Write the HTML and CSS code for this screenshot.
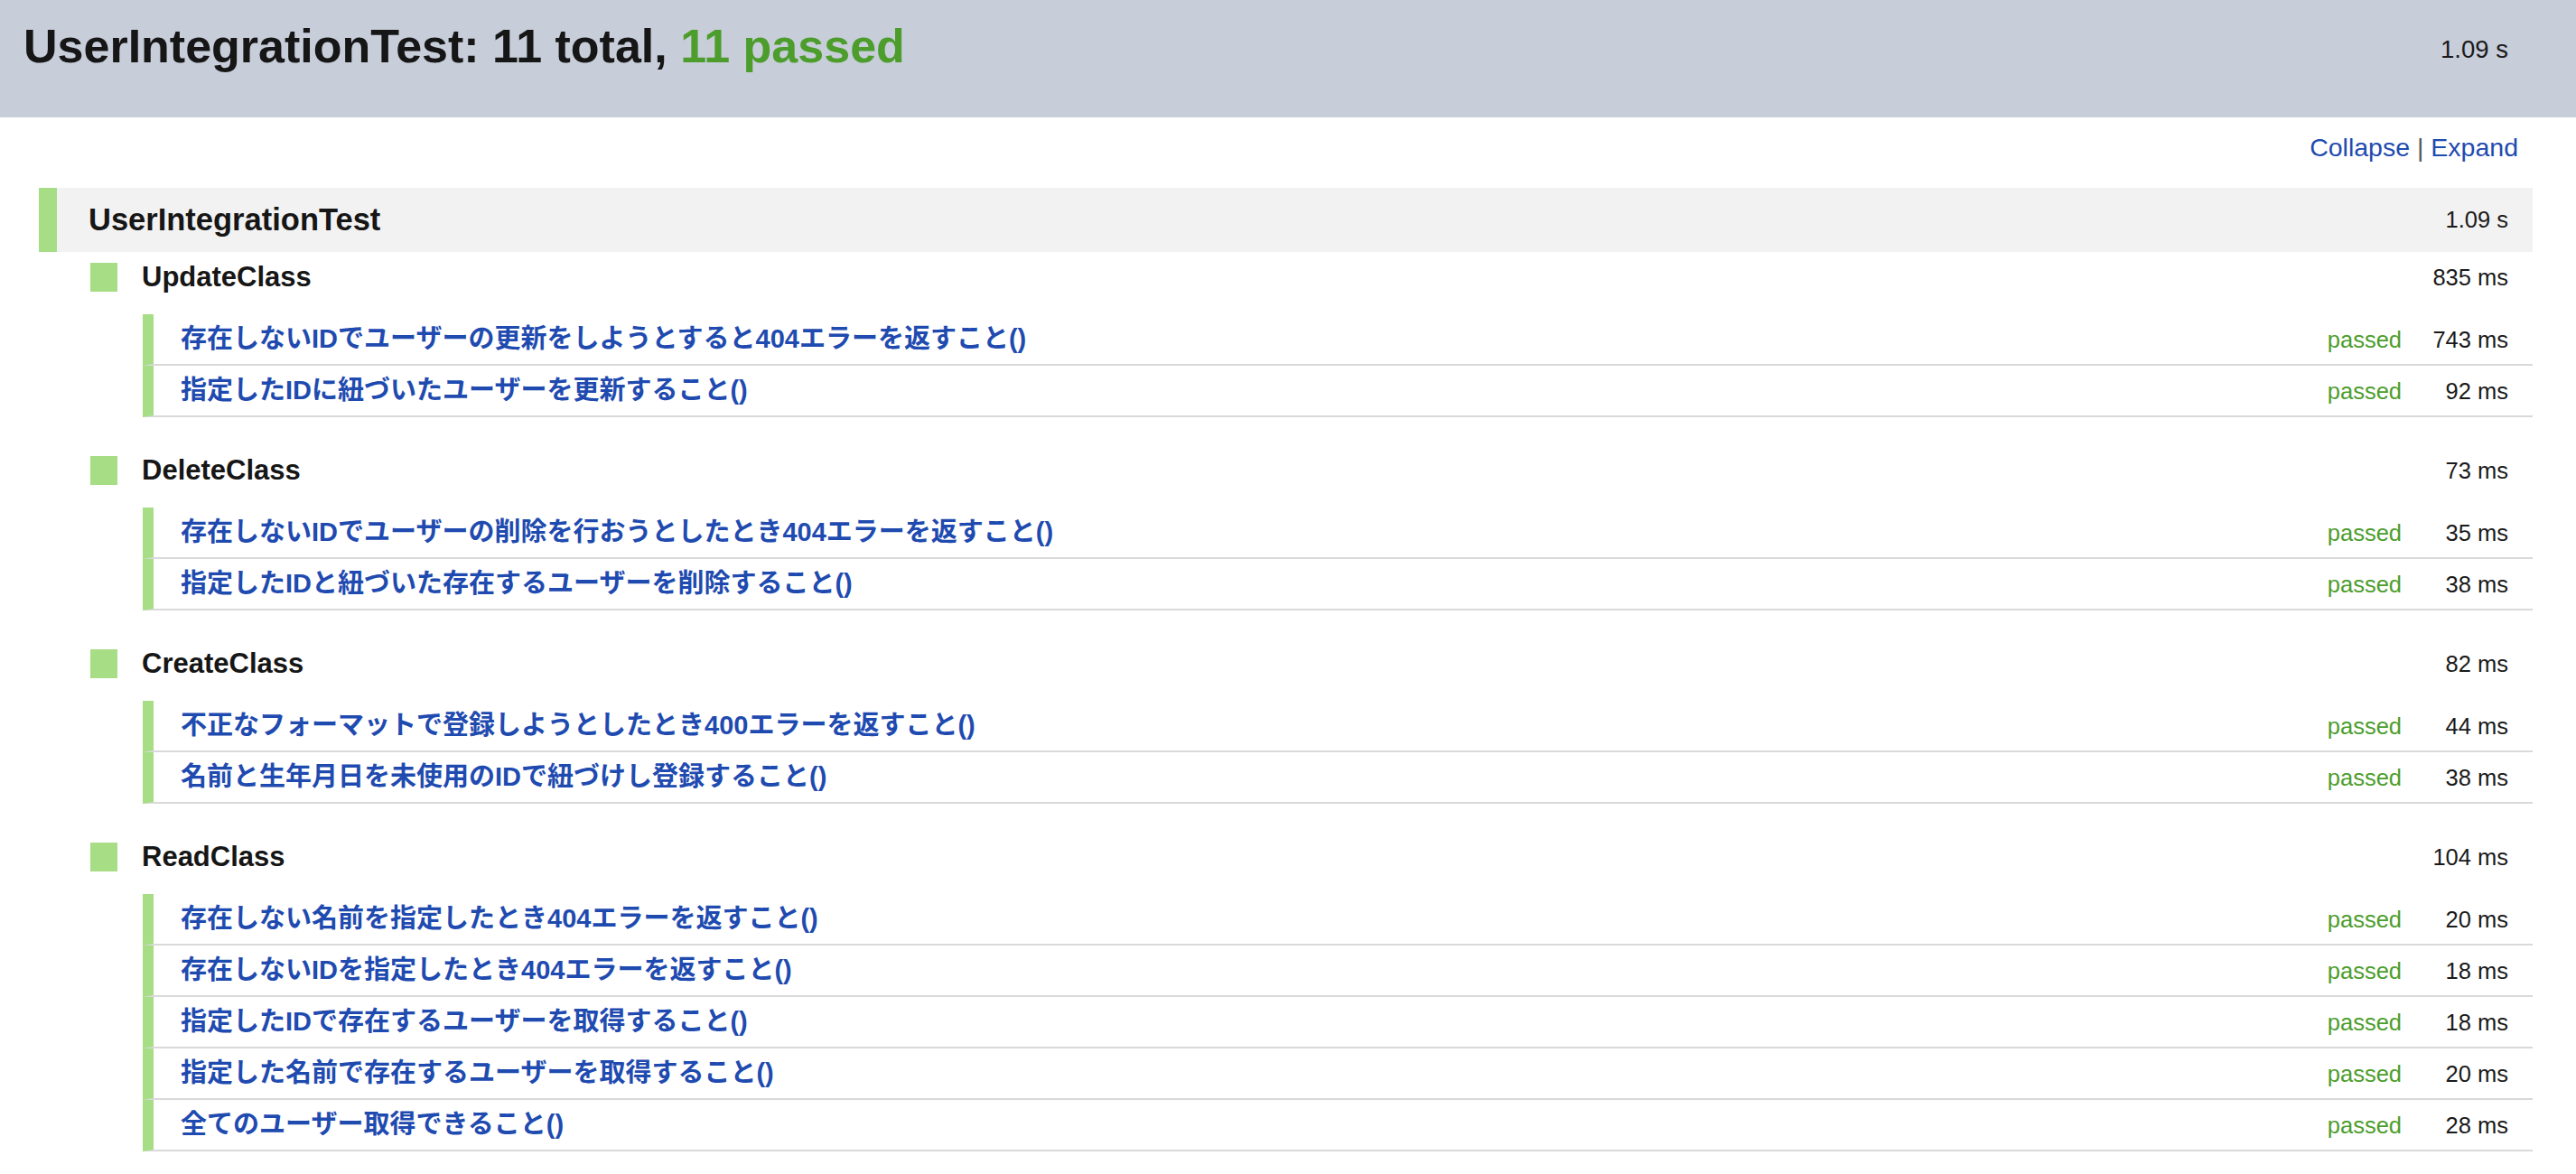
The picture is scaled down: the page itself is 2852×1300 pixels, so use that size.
FILE: index.html
```html
<!DOCTYPE html>
<html lang="ja">
<head>
<meta charset="utf-8">
<title>UserIntegrationTest</title>
<link rel="stylesheet" href="styles.css">
</head>
<body>
<header class="top">
  <h1 class="title">UserIntegrationTest: 11 total, <span class="ok">11 passed</span></h1>
  <div class="total-time">1.09 s</div>
</header>
<main class="content">
  <div class="toolbar"><a class="link" href="#">Collapse</a><span class="sep"> | </span><a class="link" href="#">Expand</a></div>
  <section class="suite">
    <div class="suite-row"><span class="suite-name">UserIntegrationTest</span><span class="time">1.09 s</span></div>

    <div class="class-block">
      <div class="class-row"><span class="sq"></span><span class="class-name">UpdateClass</span><span class="time">835 ms</span></div>
      <div class="test"><a class="test-name" href="#">存在しないIDでユーザーの更新をしようとすると404エラーを返すこと()</a><span class="status">passed</span><span class="time tt">743 ms</span></div>
      <div class="test"><a class="test-name" href="#">指定したIDに紐づいたユーザーを更新すること()</a><span class="status">passed</span><span class="time tt">92 ms</span></div>
    </div>

    <div class="class-block">
      <div class="class-row"><span class="sq"></span><span class="class-name">DeleteClass</span><span class="time">73 ms</span></div>
      <div class="test"><a class="test-name" href="#">存在しないIDでユーザーの削除を行おうとしたとき404エラーを返すこと()</a><span class="status">passed</span><span class="time tt">35 ms</span></div>
      <div class="test"><a class="test-name" href="#">指定したIDと紐づいた存在するユーザーを削除すること()</a><span class="status">passed</span><span class="time tt">38 ms</span></div>
    </div>

    <div class="class-block">
      <div class="class-row"><span class="sq"></span><span class="class-name">CreateClass</span><span class="time">82 ms</span></div>
      <div class="test"><a class="test-name" href="#">不正なフォーマットで登録しようとしたとき400エラーを返すこと()</a><span class="status">passed</span><span class="time tt">44 ms</span></div>
      <div class="test"><a class="test-name" href="#">名前と生年月日を未使用のIDで紐づけし登録すること()</a><span class="status">passed</span><span class="time tt">38 ms</span></div>
    </div>

    <div class="class-block">
      <div class="class-row"><span class="sq"></span><span class="class-name">ReadClass</span><span class="time">104 ms</span></div>
      <div class="test"><a class="test-name" href="#">存在しない名前を指定したとき404エラーを返すこと()</a><span class="status">passed</span><span class="time tt">20 ms</span></div>
      <div class="test"><a class="test-name" href="#">存在しないIDを指定したとき404エラーを返すこと()</a><span class="status">passed</span><span class="time tt">18 ms</span></div>
      <div class="test"><a class="test-name" href="#">指定したIDで存在するユーザーを取得すること()</a><span class="status">passed</span><span class="time tt">18 ms</span></div>
      <div class="test"><a class="test-name" href="#">指定した名前で存在するユーザーを取得すること()</a><span class="status">passed</span><span class="time tt">20 ms</span></div>
      <div class="test"><a class="test-name" href="#">全てのユーザー取得できること()</a><span class="status">passed</span><span class="time tt">28 ms</span></div>
    </div>
  </section>
</main>
</body>
</html>
```
FILE: styles.css
```css
html, body {
  margin: 0;
  padding: 0;
  background: #ffffff;
}
body {
  font-family: "Liberation Sans", "Noto Sans CJK JP", Arial, sans-serif;
  color: #1a1a1a;
}

.top {
  display: flex;
  justify-content: space-between;
  align-items: flex-start;
  height: 130px;
  box-sizing: border-box;
  padding: 0 75px 0 26px;
  background: #c7cdd9;
}
.title {
  margin: 21px 0 0 0;
  font-size: 52px;
  line-height: 60px;
  font-weight: bold;
  color: #161616;
}
.ok {
  color: #4c9d2c;
}
.total-time {
  margin-top: 40px;
  font-size: 27.5px;
  line-height: 30px;
  color: #1a1a1a;
}

.content {
  padding: 0 48px 40px 43px;
}
.toolbar {
  margin-top: 18px;
  padding-right: 16px;
  text-align: right;
  font-size: 28.5px;
  line-height: 30px;
  height: 30px;
  margin-bottom: 30px;
}
.link {
  color: #1f4bb0;
  text-decoration: none;
}
.sep {
  color: #555555;
}

.suite-row {
  display: flex;
  justify-content: space-between;
  height: 71px;
  line-height: 71px;
  background: #f2f2f2;
  border-left: 20px solid #a6dd85;
  padding: 0 27px 0 35px;
}
.suite-name {
  font-size: 34.5px;
  font-weight: bold;
  color: #161616;
}
.time {
  font-size: 25.5px;
  color: #1a1a1a;
}

.class-block {
  margin-left: 57px;
  margin-bottom: 31px;
}
.class-row {
  display: flex;
  align-items: center;
  height: 32px;
  padding: 12px 27px 25px 0;
}
.sq {
  width: 30px;
  height: 32px;
  background: #a6dd85;
  margin-right: 27px;
  flex: none;
}
.class-name {
  flex: 1;
  font-size: 31px;
  line-height: 32px;
  font-weight: bold;
  color: #161616;
}
.class-row .time {
  line-height: 32px;
}

.test {
  display: flex;
  align-items: baseline;
  margin-left: 58px;
  height: 55px;
  line-height: 55px;
  border-left: 12px solid #a6dd85;
  border-bottom: 2px solid #d9d9d9;
  padding: 0 27px 0 30px;
}
.test-name {
  flex: 1;
  font-size: 29px;
  font-weight: bold;
  color: #1f4bb0;
  text-decoration: none;
  white-space: nowrap;
}
.status {
  font-size: 25.5px;
  color: #4c9d2c;
}
.tt {
  width: 118px;
  text-align: right;
}
```
